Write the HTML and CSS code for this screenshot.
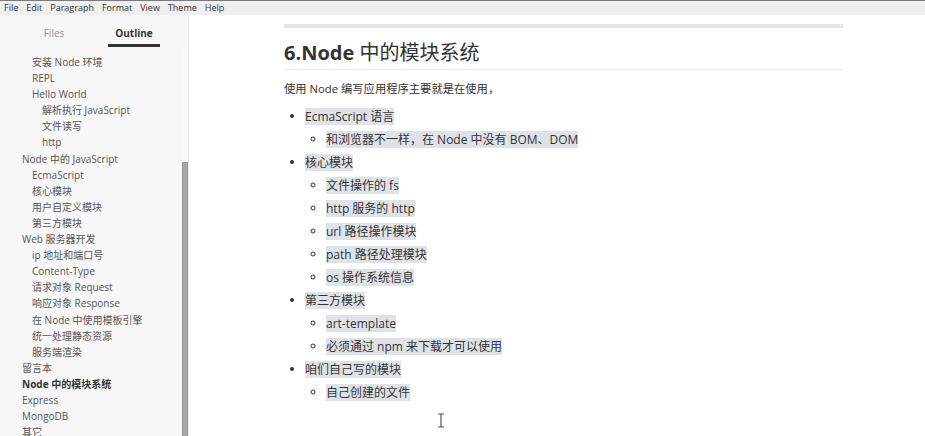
FILE: index.html
```html
<!DOCTYPE html>
<html lang="zh-CN">
<head>
<meta charset="utf-8">
<title>Typora</title>
<link rel="stylesheet" href="styles.css">
</head>
<body>
<div class="app">
  <nav class="menubar">
    <span>File</span><span>Edit</span><span>Paragraph</span><span>Format</span><span>View</span><span>Theme</span><span>Help</span>
  </nav>
  <div class="main">
    <aside class="sidebar">
      <div class="tabs">
        <div class="tab">Files</div>
        <div class="tab active">Outline</div>
      </div>
      <div class="sidebody">
        <ul class="outline">
          <li class="l2">安装 Node 环境</li>
          <li class="l2">REPL</li>
          <li class="l2">Hello World</li>
          <li class="l3">解析执行 JavaScript</li>
          <li class="l3">文件读写</li>
          <li class="l3">http</li>
          <li class="l1">Node 中的 JavaScript</li>
          <li class="l2">EcmaScript</li>
          <li class="l2">核心模块</li>
          <li class="l2">用户自定义模块</li>
          <li class="l2">第三方模块</li>
          <li class="l1">Web 服务器开发</li>
          <li class="l2">ip 地址和端口号</li>
          <li class="l2">Content-Type</li>
          <li class="l2">请求对象 Request</li>
          <li class="l2">响应对象 Response</li>
          <li class="l2">在 Node 中使用模板引擎</li>
          <li class="l2">统一处理静态资源</li>
          <li class="l2">服务端渲染</li>
          <li class="l1">留言本</li>
          <li class="l1 current">Node 中的模块系统</li>
          <li class="l1">Express</li>
          <li class="l1">MongoDB</li>
          <li class="l1">其它</li>
        </ul>
        <div class="track"><div class="thumb"></div></div>
      </div>
    </aside>
    <main class="editor">
      <div class="content">
        <hr class="rule">
        <h2 class="title">6.Node <span class="cjk">中的模块系统</span></h2>
        <p class="para">使用 Node 编写应用程序主要就是在使用，</p>
        <ul class="list">
          <li><span class="hl">EcmaScript 语言</span>
            <ul><li><span class="hl">和浏览器不一样，在 Node 中没有 BOM、DOM</span></li></ul>
          </li>
          <li><span class="hl">核心模块</span>
            <ul>
              <li><span class="hl">文件操作的 fs</span></li>
              <li><span class="hl">http 服务的 http</span></li>
              <li><span class="hl">url 路径操作模块</span></li>
              <li><span class="hl">path 路径处理模块</span></li>
              <li><span class="hl">os 操作系统信息</span></li>
            </ul>
          </li>
          <li><span class="hl">第三方模块</span>
            <ul>
              <li><span class="hl">art-template</span></li>
              <li><span class="hl">必须通过 npm 来下载才可以使用</span></li>
            </ul>
          </li>
          <li><span class="hl">咱们自己写的模块</span>
            <ul><li><span class="hl">自己创建的文件</span></li></ul>
          </li>
        </ul>
      </div>
      <svg class="ibeam" width="8" height="15" viewBox="0 0 8 15"><path d="M1 1h6M1 14h6M4 1v13" stroke="#555" stroke-width="1.2" fill="none"/></svg>
    </main>
  </div>
</div>
</body>
</html>
```

FILE: styles.css
```css
* { box-sizing: border-box; }
html, body { margin: 0; padding: 0; }
body {
  width: 925px;
  height: 436px;
  overflow: hidden;
  background: #fff;
  font-family: "Open Sans", "Noto Sans CJK SC", sans-serif;
  color: #333;
}
.app { display: flex; flex-direction: column; height: 436px; }
.menubar {
  height: 15px;
  border-top: 1px solid #7a7a7a;
  background: #efefef;
  display: flex;
  gap: 8px;
  padding-left: 4px;
  font-size: 9px;
  line-height: 13px;
  color: #333;
  flex: none;
}
.main { display: flex; flex: 1; min-height: 0; }
.sidebar {
  width: 189px;
  flex: none;
  background: #f7f7f7;
  border-right: 1px solid #ececec;
  display: flex;
  flex-direction: column;
  overflow: hidden;
}
.tabs {
  display: flex;
  height: 32px;
  padding: 10px 14px 0;
  flex: none;
}
.tab {
  width: 80px;
  text-align: center;
  font-size: 10px;
  line-height: 16px;
  color: #949494;
}
.tab.active { color: #333; font-weight: 700; }
.tab.active::after {
  content: "";
  display: block;
  width: 52px;
  height: 3px;
  margin: 3px auto 0;
  background: #333;
}
.sidebody { display: flex; flex: 1; min-height: 0; }
.outline {
  list-style: none;
  margin: 0;
  padding: 7px 0 0;
  flex: 1;
  font-size: 10px;
  line-height: 16.1px;
  color: #555;
  white-space: nowrap;
}
.outline .l1 { padding-left: 22px; }
.outline .l2 { padding-left: 32px; }
.outline .l3 { padding-left: 42px; }
.outline .current { font-weight: 700; color: #333; }
.track {
  width: 6px;
  flex: none;
  background: #f9f9f9;
}
.thumb {
  margin-top: 115px;
  height: 300px;
  background: #a6a6a6;
  border: 1px solid #999;
}
.editor {
  flex: 1;
  position: relative;
  padding: 9px 0 0 95px;
  overflow: hidden;
}
.content { width: 559px; }
.rule {
  margin: 0;
  border: 0;
  height: 4px;
  background: #e6e6e6;
}
.title {
  margin: 10px 0 0;
  font-size: 20px;
  line-height: 30px;
  font-weight: 700;
  padding-bottom: 1px;
  border-bottom: 1px solid #eee;
  color: #333;
}
.title .cjk { font-weight: 400; }
.para {
  margin: 9px 0 0;
  font-size: 11.3px;
  line-height: 20px;
}
.list {
  margin: 5px 0 0;
  padding-left: 21px;
  font-size: 12px;
  line-height: 23px;
  list-style: disc;
}
.list ul {
  margin: 0;
  padding-left: 21px;
  list-style: circle;
}
.hl {
  display: inline-block;
  line-height: 17px;
  vertical-align: middle;
  background: #dfe3e8;
}
.ibeam { position: absolute; left: 248px; top: 398px; }
```
